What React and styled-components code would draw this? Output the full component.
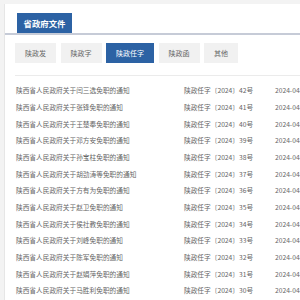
import React from 'react'
import styled, { createGlobalStyle } from 'styled-components'

const GlobalStyle = createGlobalStyle`
  html, body {
    margin: 0;
    padding: 0;
    background: #f3f3f3;
    font-family: "Noto Sans CJK SC", "Noto Sans", sans-serif;
    overflow: hidden;
  }
`

const docs = [
  ['闫三选', 42],
  ['张锋', 41],
  ['王楚奉', 40],
  ['邓方安', 39],
  ['孙宝柱', 38],
  ['胡劲涛等', 37],
  ['方有为', 36],
  ['赵卫', 35],
  ['侯社教', 34],
  ['刘峰', 33],
  ['陈军', 32],
  ['赵娟萍', 31],
  ['马胜利', 30],
]

const tabs = ['陕政发', '陕政字', '陕政任字', '陕政函', '其他']

const Page = styled.div`
  width: 320px;
  height: 300px;
  padding: 4px 0 0 4px;
  box-sizing: border-box;
`

const Panel = styled.div`
  background: #fff;
  border-left: 1px solid #e6e6e6;
  height: 100%;
`

const Header = styled.div`
  padding: 9px 0 0 12px;
  border-bottom: 2px solid #c6cbd7;
  display: flex;
`

const HeaderTab = styled.div`
  width: 55px;
  height: 20px;
  background: #2c62a4;
  color: #fff;
  font-size: 8.4px;
  font-weight: bold;
  display: flex;
  align-items: center;
  justify-content: center;
`

const Body = styled.div`
  padding: 8px 0 0 10px;
`

const TabRow = styled.div`
  display: flex;
  gap: 4.5px;
  padding-bottom: 12px;
  border-bottom: 1px solid #ebebeb;
`

const TabButton = styled.div`
  height: 20px;
  padding: 0 10px;
  display: flex;
  align-items: center;
  font-size: 7px;
  background: ${({ $active }) => ($active ? '#2c62a4' : '#f1f1f1')};
  color: ${({ $active }) => ($active ? '#fff' : '#666')};
`

const List = styled.div`
  padding-top: 6px;
`

const Row = styled.div`
  display: grid;
  grid-template-columns: 168px 91px auto;
  height: 16.67px;
  align-items: center;
  font-size: 6.7px;
  color: #666;
  white-space: nowrap;
  padding-left: 1px;
`

export default function App() {
  return (
    <Page>
      <GlobalStyle />
      <Panel>
        <Header>
          <HeaderTab>省政府文件</HeaderTab>
        </Header>
        <Body>
          <TabRow>
            {tabs.map((t) => (
              <TabButton key={t} $active={t === '陕政任字'}>
                {t}
              </TabButton>
            ))}
          </TabRow>
          <List>
            {docs.map(([name, num]) => (
              <Row key={num}>
                <span>陕西省人民政府关于{name}免职的通知</span>
                <span>陕政任字〔2024〕{num}号</span>
                <span>2024-04-25</span>
              </Row>
            ))}
          </List>
        </Body>
      </Panel>
    </Page>
  )
}
